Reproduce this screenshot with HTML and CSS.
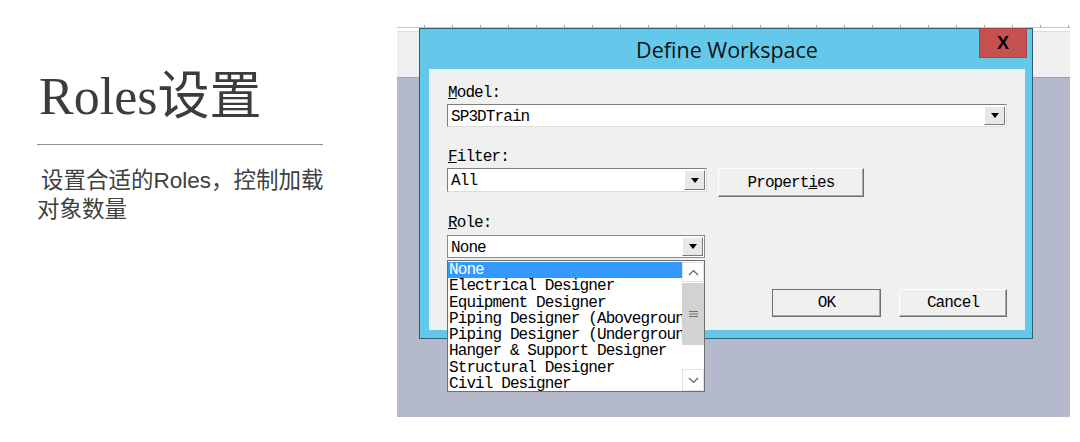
FILE: index.html
```html
<!DOCTYPE html>
<html lang="zh-CN">
<head>
  <meta charset="UTF-8">
  <meta name="viewport" content="width=device-width, initial-scale=1.0">
  <title>Roles设置</title>
  <link rel="stylesheet" href="styles.css">
</head>
<body>
  <main class="slide">
    <section class="intro">
      <h1 class="intro-title">Roles设置</h1>
      <div class="intro-rule"></div>
      <p class="intro-text">设置合适的Roles，控制加载<br>对象数量</p>
    </section>

    <figure class="capture">
      <div class="capture-ruler"></div>
      <div class="capture-toolbar"></div>
      <div class="capture-canvas"></div>

      <!-- Define Workspace window -->
      <div class="dialog">
        <div class="dialog-titlebar">Define Workspace</div>
        <div class="dialog-close">X</div>

        <div class="dialog-body">
          <div class="field">
            <span class="field-label"><u>M</u>odel:</span>
            <div class="combo combo-wide">
              <span class="combo-value">SP3DTrain</span>
              <span class="combo-button"></span>
            </div>
          </div>

          <div class="field field-filter">
            <span class="field-label"><u>F</u>ilter:</span>
            <div class="field-row">
              <div class="combo combo-filter">
                <span class="combo-value">All</span>
                <span class="combo-button"></span>
              </div>
              <button class="btn btn-properties">Propert<u>i</u>es</button>
            </div>
          </div>

          <div class="field field-role">
            <span class="field-label"><u>R</u>ole:</span>
            <div class="role-picker">
              <div class="combo combo-role">
                <span class="combo-value">None</span>
                <span class="combo-button"></span>
              </div>

              <!-- open dropdown -->
              <div class="role-list">
                <ul class="role-options">
                  <li class="is-selected">None</li>
                  <li>Electrical Designer</li>
                  <li>Equipment Designer</li>
                  <li>Piping Designer (Aboveground)</li>
                  <li>Piping Designer (Underground)</li>
                  <li>Hanger &amp; Support Designer</li>
                  <li>Structural Designer</li>
                  <li>Civil Designer</li>
                </ul>
                <div class="role-scroll">
                  <span class="scroll-arrow">
                    <svg width="11" height="7" viewBox="0 0 11 7"><polyline points="1,6 5.5,1.5 10,6" fill="none" stroke="#606060" stroke-width="1.2"/></svg>
                  </span>
                  <span class="scroll-thumb">
                    <svg width="9" height="8" viewBox="0 0 9 8"><path d="M0 1.5h9M0 4h9M0 6.5h9" stroke="#707070" stroke-width="1"/></svg>
                  </span>
                  <span class="scroll-track"></span>
                  <span class="scroll-arrow scroll-arrow-down">
                    <svg width="11" height="7" viewBox="0 0 11 7"><polyline points="1,1 5.5,5.5 10,1" fill="none" stroke="#606060" stroke-width="1.2"/></svg>
                  </span>
                </div>
              </div>
            </div>
          </div>

          <div class="dialog-actions">
            <button class="btn btn-ok">OK</button>
            <button class="btn btn-cancel">Cancel</button>
          </div>
        </div>
      </div>
    </figure>
  </main>
</body>
</html>
```

FILE: styles.css
```css
/* Page */
* {
  box-sizing: border-box;
}

body {
  margin: 0;
  background: #ffffff;
  font-family: "Liberation Sans", "Noto Sans CJK SC", sans-serif;
  color: #404040;
}

.slide {
  display: flex;
  width: 1080px;
  height: 442px;
  overflow: hidden;
}

/* Left column: heading and note */
.intro {
  flex: none;
  width: 397px;
  padding: 67px 0 0 37px;
}

.intro-title {
  margin: 0 0 0 2px;
  font-family: "Liberation Serif", "Noto Sans CJK SC", serif;
  font-weight: normal;
  font-size: 52px;
  line-height: 60px;
  color: #3c3c3c;
}

.intro-rule {
  width: 286px;
  margin-top: 17px;
  border-top: 1px solid #8c8c8c;
}

.intro-text {
  margin: 21px 0 0;
  font-size: 22.5px;
  line-height: 29px;
  text-indent: 4px;
}

/* Right column: application capture */
.capture {
  position: relative;
  flex: none;
  display: flex;
  flex-direction: column;
  width: 673px;
  height: 392px;
  margin: 25px 0 0;
}

.capture-ruler {
  height: 6px;
  background:
    repeating-linear-gradient(90deg, transparent 0 27px, #a8a8a8 27px 28px) top / 100% 3px no-repeat,
    linear-gradient(#c8c8c8, #c8c8c8) 0 2px / 100% 1px no-repeat;
}

.capture-toolbar {
  height: 47px;
  background: #f0f0f0;
  border-top: 1px solid #dcdcdc;
  border-bottom: 1px solid #a0a0a0;
}

.capture-canvas {
  flex: 1;
  background: #b4bacb;
}

/* Dialog window */
.dialog {
  position: absolute;
  left: 22px;
  top: 3px;
  width: 614px;
  padding: 0 7px 8px 9px;
  background: #64c8ea;
  border: 1px solid #2d5f74;
}

.dialog-titlebar {
  display: flex;
  align-items: center;
  justify-content: center;
  height: 40px;
  padding-top: 1px;
  font-family: "Open Sans", "Noto Sans", sans-serif;
  font-size: 21.5px;
  color: #111;
}

.dialog-close {
  position: absolute;
  top: -1px;
  right: 5px;
  display: flex;
  align-items: center;
  justify-content: center;
  width: 48px;
  height: 30px;
  background: #c75050;
  border: 1px solid #a84444;
  font-family: "Liberation Sans", sans-serif;
  font-weight: bold;
  font-size: 18px;
  color: #000;
}

.dialog-body {
  height: 261px;
  padding: 16px 18px 0;
  background: #f0f0f0;
  font-family: "Liberation Mono", monospace;
  font-size: 16px;
  letter-spacing: -0.9px;
  color: #000;
}

/* Form fields */
.field {
  display: flex;
  flex-direction: column;
  align-items: flex-start;
  gap: 3px;
}

.field-label {
  line-height: 16px;
  padding-left: 1px;
}

.field-filter {
  margin-top: 22px;
}

.field-role {
  margin-top: 18px;
  gap: 4px;
}

.field-row {
  display: flex;
  align-items: flex-start;
  gap: 11px;
}

.combo {
  display: flex;
  height: 23px;
  background: #ffffff;
  border: 1px solid;
  border-color: #7e7e7e #dcdcdc #dcdcdc #7e7e7e;
}

.combo-wide {
  align-self: stretch;
}

.combo-filter {
  width: 260px;
  height: 24px;
}

.combo-role {
  width: 258px;
  border-color: #8a8a8a;
}

.combo-value {
  flex: 1;
  padding: 4px 0 0 3px;
  line-height: 16px;
  white-space: nowrap;
}

.combo-button {
  display: flex;
  align-items: center;
  justify-content: center;
  width: 21px;
  margin: 1px;
  background: #e8e8e8;
  border: 1px solid;
  border-color: #ffffff #7a7a7a #7a7a7a #ffffff;
}

.combo-button::after {
  content: "";
  border-left: 4.5px solid transparent;
  border-right: 4.5px solid transparent;
  border-top: 5px solid #000;
}

/* Push buttons */
.btn {
  height: 29px;
  padding: 0;
  background: #f0f0f0;
  border: 1px solid;
  border-color: #ffffff #6e6e6e #6e6e6e #ffffff;
  box-shadow: inset -1px -1px #a8a8a8;
  font: inherit;
  letter-spacing: inherit;
  color: #000;
}

.btn-properties {
  width: 146px;
}

.dialog-actions {
  display: flex;
  justify-content: flex-end;
  gap: 18px;
  margin-top: 31px;
}

.btn-ok {
  width: 109px;
  height: 28px;
  border-color: #6e6e6e;
}

.btn-cancel {
  width: 108px;
  height: 28px;
}

/* Role dropdown */
.role-picker {
  position: relative;
}

.role-list {
  position: absolute;
  top: 25px;
  left: 0;
  display: flex;
  width: 258px;
  height: 132px;
  background: #ffffff;
  border: 1px solid #6f6f6f;
}

.role-options {
  flex: 1;
  margin: 0;
  padding: 1px 0 0;
  overflow: hidden;
  list-style: none;
}

.role-options li {
  padding-left: 1px;
  line-height: 16.3px;
  white-space: nowrap;
}

.role-options li.is-selected {
  background: #3399ff;
  color: #ffffff;
}

.role-scroll {
  display: flex;
  flex-direction: column;
  width: 22px;
  padding-top: 1px;
  background: #ffffff;
}

.scroll-arrow {
  display: flex;
  align-items: center;
  justify-content: center;
  height: 20px;
  border: 1px solid #e2e2e2;
}

.scroll-arrow-down {
  height: 22px;
}

.scroll-thumb {
  display: flex;
  align-items: center;
  justify-content: center;
  height: 62px;
  margin-top: 1px;
  background: #d2d2d2;
}

.scroll-track {
  flex: 1;
}
```
